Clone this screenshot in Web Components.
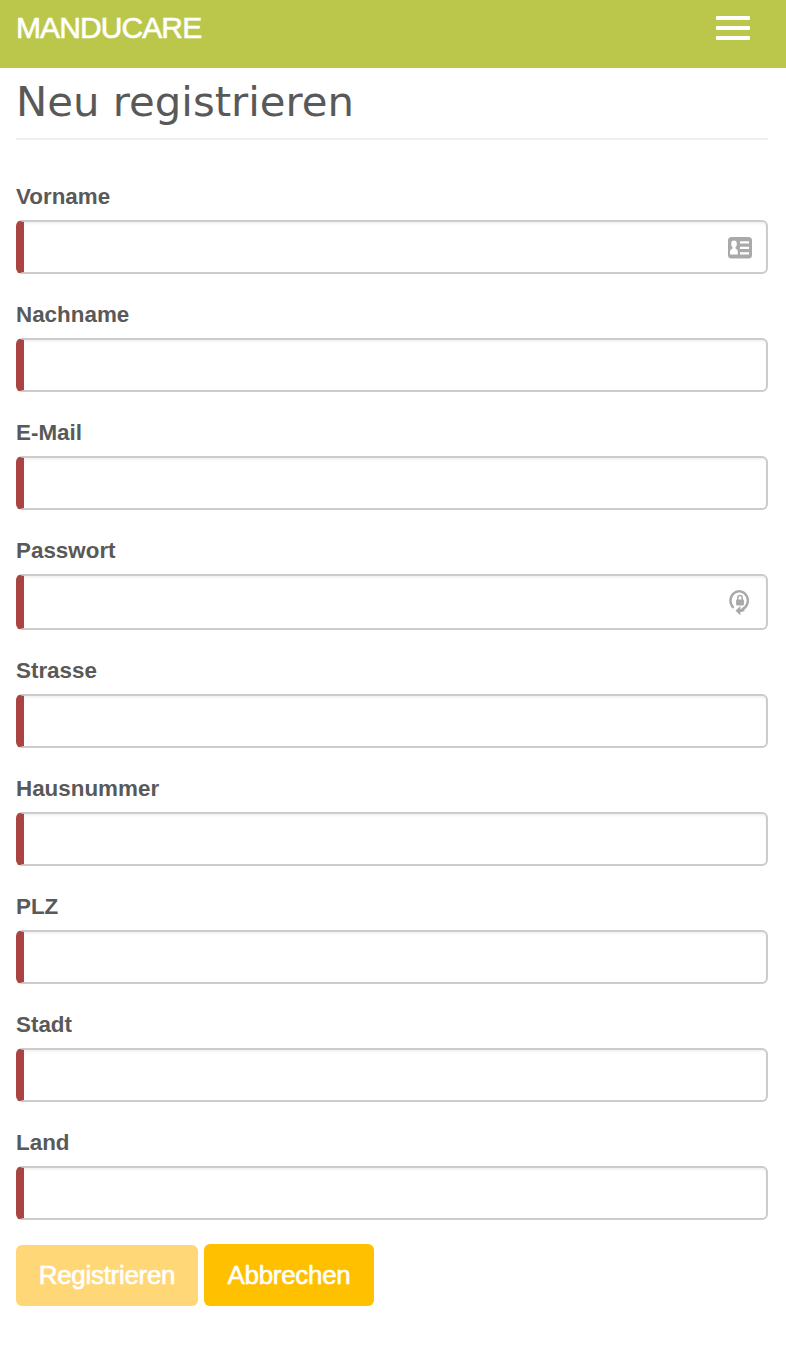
<!DOCTYPE html>
<html lang="de">
<head>
<meta charset="utf-8">
<title>Manducare</title>
<style>
html, body { margin: 0; background: #fff; }
body { font-family: "Liberation Sans", Arial, sans-serif; color: #595959; min-height: 1352px; }
</style>
</head>
<body>
<md-navbar>MANDUCARE</md-navbar>
<md-page>
  <md-title slot="title">Neu registrieren</md-title>
  <md-field label="Vorname">
    <svg slot="icon" width="24" height="22" viewBox="0 0 24 22"><rect width="24" height="21.500" rx="3.500" fill="#a9a9a9"/><ellipse cx="6" cy="6.900" rx="2.800" ry="3.300" fill="#fff"/><path d="M4.500 8h3v3.500q2.300 1 2.300 3v3H2v-3q0-2 2.500-3zM12 4.200h9v2.200h-9zM12 9.800h9v2.200h-9zM12 15.300h9v2.200h-9z" fill="#fff"/></svg>
  </md-field>
  <md-field label="Nachname"></md-field>
  <md-field label="E-Mail"></md-field>
  <md-field label="Passwort" tall>
    <svg slot="icon" width="24" height="26" viewBox="0 0 24 26"><path d="M5.600 17.800A8.700 9.300 0 1 1 14.500 19.200" fill="none" stroke="#a9a9a9" stroke-width="2.400"/><path d="M7.500 20.700 12.300 16v3l3-1.200 1.500 3.200-4.500 1.200v3z" fill="#a9a9a9"/><rect x="8.100" y="9.400" width="7.800" height="6" rx=".8" fill="#a9a9a9"/><path d="M9.800 10V7.700a2.200 2.200 0 0 1 4.400 0V10" fill="none" stroke="#a9a9a9" stroke-width="1.500"/></svg>
  </md-field>
  <md-field label="Strasse"></md-field>
  <md-field label="Hausnummer"></md-field>
  <md-field label="PLZ"></md-field>
  <md-field label="Stadt"></md-field>
  <md-field label="Land"></md-field>
  <md-button slot="actions" disabled>Registrieren</md-button>
  <md-button slot="actions">Abbrechen</md-button>
</md-page>
<script>
const define = (name, html, setup) => customElements.define(name, class extends HTMLElement {
  constructor() {
    super();
    this.attachShadow({ mode: "open" }).innerHTML = html;
    if (setup) setup(this, this.shadowRoot);
  }
});

define("md-navbar", `<style>
:host { display: flex; justify-content: space-between; box-sizing: border-box; height: 68px; padding: 10px 36px 0 16px; background: #bbc74b; color: #fff; font-size: 30px; line-height: 36px; letter-spacing: -.9px; -webkit-text-stroke: .6px #fff; }
.toggle { display: flex; flex-direction: column; gap: 6px; padding: 6px 0 0; border: 0; background: none; width: 34px; }
i { display: block; width: 34px; height: 4px; border-radius: 1px; background: #fff; }
</style><span><slot></slot></span><button class="toggle" aria-label="Menü"><i></i><i></i><i></i></button>`);

define("md-title", `<style>
:host { display: block; box-sizing: border-box; height: 72px; border-bottom: 2px solid #eee; padding-top: 8px; }
h1 { margin: 0; font: 400 40px/52px "DejaVu Sans", sans-serif; transform: scaleX(1.045); transform-origin: 0 0; color: #595959; white-space: nowrap; width: 90%; }
</style><h1><slot></slot></h1>`);

define("md-page", `<style>
:host { display: block; padding: 0 18px 0 16px; }
form { padding-top: 42px; }
.actions { display: flex; align-items: flex-end; gap: 6px; height: 62px; }
</style><slot name="title"></slot><form><slot></slot><div class="actions"><slot name="actions"></slot></div></form>`);

define("md-field", `<style>
:host { display: block; margin-bottom: 26px; }
:host(:last-of-type) { margin-bottom: 24px; }
label { display: block; height: 28px; margin-bottom: 10px; font-size: 22.4px; line-height: 30px; font-weight: 700; }
.control { display: flex; align-items: center; box-sizing: border-box; height: 54px; padding-right: 14px; border: 2px solid #ccc; border-left: 8px solid #a94442; border-radius: 6px; box-shadow: inset 0 2px 2px rgba(0,0,0,.05); }
:host([tall]) .control { height: 56px; }
input { flex: 1; min-width: 0; height: 40px; border: 0; outline: 0; padding: 0 16px; background: transparent; font: inherit; }
::slotted(svg) { margin-top: 1px; }
</style><label for="f"></label><div class="control"><input id="f"><slot name="icon"></slot></div>`,
(host, root) => { root.querySelector("label").textContent = host.getAttribute("label"); });

define("md-button", `<style>
:host { display: block; }
button { display: block; box-sizing: border-box; width: 170px; height: 62px; padding: 0; border: 0; border-radius: 6px; background: #ffc000; color: #fff; font: 400 26px/60px "Liberation Sans", Arial, sans-serif; letter-spacing: -.3px; -webkit-text-stroke: .6px #fff; }
:host([disabled]) button { width: 182px; height: 61px; background: #ffd777; line-height: 59px; }
</style><button><slot></slot></button>`);
</script>
</body>
</html>
